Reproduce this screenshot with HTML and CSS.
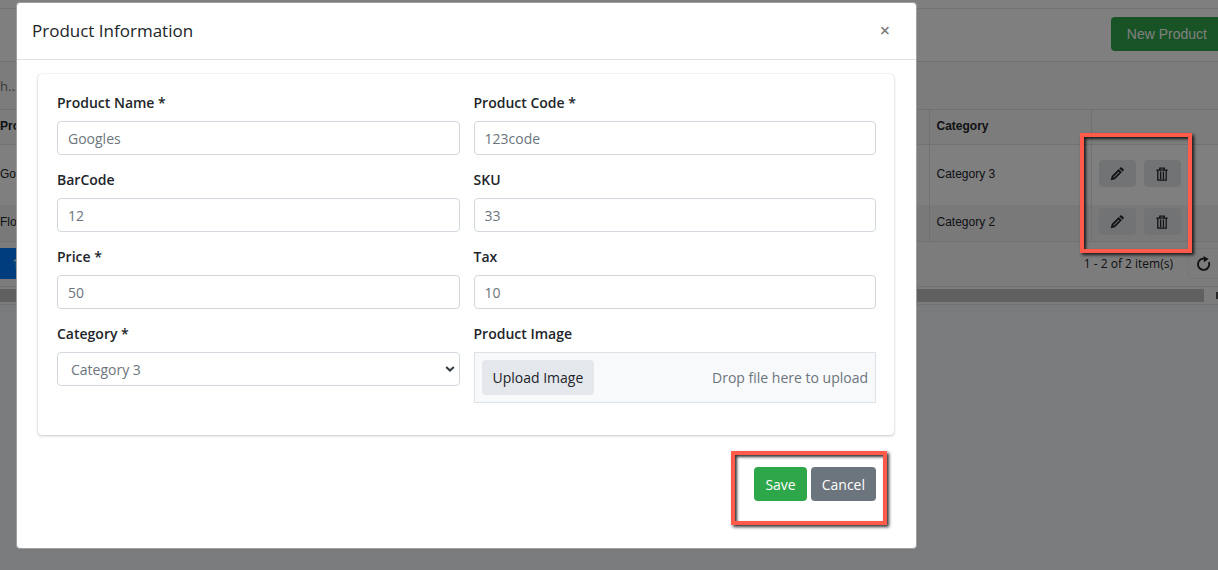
FILE: index.html
```
<!DOCTYPE html>
<html lang="en">
<head>
    <meta charset="UTF-8">
    <meta name="viewport" content="width=device-width, initial-scale=1.0">
    <title>Products</title>
    <link rel="stylesheet" href="styles.css">
</head>
<body>
    <svg class="icon-defs" aria-hidden="true">
        <symbol id="icon-pencil" viewBox="0 0 16 16">
            <path d="M.8 15.2l1.2-4.8 8-8 3.6 3.6-8 8z"/>
            <path d="M10.8 1.6l1-1q.8-.7 1.6 0l2 2q.7.8 0 1.6l-1 1z"/>
            <path d="M4 12l6.4-6.4" stroke="#e4e7eb" stroke-width="1.2"/>
        </symbol>
        <symbol id="icon-trash" viewBox="0 0 16 16">
            <path d="M1.5 3.5h13M5.5 3V1.2h5V3M3.2 4v11h9.6V4M6.4 5v9M9.6 5v9" fill="none" stroke="currentColor" stroke-width="1.5"/>
        </symbol>
        <symbol id="icon-reload" viewBox="0 0 16 16">
            <path d="M9.5 3A6 6 0 1 0 13.6 6.5" fill="none" stroke="currentColor" stroke-width="2"/>
            <path d="M8 0l5.5 3.2L8.4 6.6z"/>
        </symbol>
    </svg>

    <main class="page">
        <header class="page-header">
            <button class="btn-new" type="button">New Product</button>
        </header>

        <div class="grid-toolbar">
            <input class="grid-search" type="text" placeholder="h..." aria-label="Search">
        </div>

        <table class="grid">
            <thead>
                <tr>
                    <th>Product Name</th>
                    <th class="col-category">Category</th>
                    <th class="col-actions"></th>
                </tr>
            </thead>
            <tbody>
                <tr class="row-tall">
                    <td>Googles</td>
                    <td>Category 3</td>
                    <td>
                        <div class="actions">
                            <button class="btn-icon" type="button" aria-label="Edit"><svg><use href="#icon-pencil"/></svg></button>
                            <button class="btn-icon" type="button" aria-label="Delete"><svg><use href="#icon-trash"/></svg></button>
                        </div>
                    </td>
                </tr>
                <tr class="row-alt">
                    <td>Floats</td>
                    <td>Category 2</td>
                    <td>
                        <div class="actions">
                            <button class="btn-icon" type="button" aria-label="Edit"><svg><use href="#icon-pencil"/></svg></button>
                            <button class="btn-icon" type="button" aria-label="Delete"><svg><use href="#icon-trash"/></svg></button>
                        </div>
                    </td>
                </tr>
            </tbody>
        </table>

        <div class="pager">
            <button class="pager-page" type="button">1</button>
            <span class="pager-info">1 - 2 of 2 item(s)</span>
            <button class="pager-reload" type="button" aria-label="Reload"><svg><use href="#icon-reload"/></svg></button>
        </div>
        <div class="scrollbar">
            <div class="scrollbar-thumb"></div>
            <div class="scrollbar-arrow"></div>
        </div>
    </main>

    <div class="backdrop">
        <div class="modal" role="dialog" aria-labelledby="modal-title">
            <div class="modal-header">
                <h5 class="modal-title" id="modal-title">Product Information</h5>
                <button class="modal-close" type="button" aria-label="Close">×</button>
            </div>

            <form class="modal-body">
                <div class="card">
                    <div class="field">
                        <label for="name">Product Name *</label>
                        <input class="control" id="name" type="text" value="Googles">
                    </div>
                    <div class="field">
                        <label for="code">Product Code *</label>
                        <input class="control" id="code" type="text" value="123code">
                    </div>
                    <div class="field">
                        <label for="barcode">BarCode</label>
                        <input class="control" id="barcode" type="text" value="12">
                    </div>
                    <div class="field">
                        <label for="sku">SKU</label>
                        <input class="control" id="sku" type="text" value="33">
                    </div>
                    <div class="field">
                        <label for="price">Price *</label>
                        <input class="control" id="price" type="text" value="50">
                    </div>
                    <div class="field">
                        <label for="tax">Tax</label>
                        <input class="control" id="tax" type="text" value="10">
                    </div>
                    <div class="field">
                        <label for="category">Category *</label>
                        <div class="select-wrap">
                            <select class="control" id="category">
                                <option>Category 3</option>
                                <option>Category 2</option>
                            </select>
                            <svg class="select-arrow" viewBox="0 0 10 6"><path d="M1.2 1l3.8 3.6L8.8 1" fill="none" stroke="currentColor" stroke-width="2"/></svg>
                        </div>
                    </div>
                    <div class="field">
                        <label for="upload">Product Image</label>
                        <div class="upload">
                            <button class="btn btn-light" id="upload" type="button">Upload Image</button>
                            <span class="upload-hint">Drop file here to upload</span>
                        </div>
                    </div>
                </div>

                <div class="modal-footer">
                    <button class="btn btn-success" type="button">Save</button>
                    <button class="btn btn-secondary" type="button">Cancel</button>
                    <div class="highlight highlight-footer"></div>
                </div>
            </form>
        </div>
    </div>

    <div class="highlight highlight-actions"></div>
</body>
</html>
```
FILE: styles.css
```
:root {
    --text: #212529;
    --muted: #6c757d;
    --border: #dee2e6;
    --control-border: #d3d8de;
    --success: #2ea64a;
    --primary: #007bff;
    --highlight: #ff5a4a;
    --ui-font: "Open Sans", "Noto Sans", sans-serif;
    --grid-font: "Liberation Sans", Arial, sans-serif;
}

* {
    box-sizing: border-box;
}

body {
    margin: 0;
    min-height: 100vh;
    overflow: hidden;
    background-color: #f4f6f9;
    color: var(--text);
    font-family: var(--ui-font);
    font-size: 14px;
}

button,
input,
select {
    font: inherit;
    color: inherit;
}

svg {
    fill: currentColor;
}

.icon-defs {
    position: absolute;
    width: 0;
    height: 0;
}

/* Product list */
.page {
    padding-top: 8px;
    background-color: #fff;
}

.page-header {
    display: flex;
    justify-content: flex-end;
    padding: 8px 0 10px;
    border-top: 1px solid var(--border);
}

.btn-new {
    height: 34px;
    padding: 0 11px 0 16px;
    border: 0;
    border-radius: 4px 0 0 4px;
    background-color: var(--success);
    color: #fff;
    font-family: var(--grid-font);
    font-size: 14px;
}

.grid-toolbar {
    height: 48px;
    padding: 8px 0;
    border-top: 1px solid var(--border);
    background-color: #f8f8f8;
}

.grid-search {
    width: 200px;
    height: 32px;
    padding: 0;
    border: 0;
    background: none;
    font-size: 13px;
}

.grid {
    width: 100%;
    table-layout: fixed;
    border-collapse: collapse;
    font-family: var(--grid-font);
    font-size: 12px;
}

.grid th,
.grid td {
    height: 36px;
    padding: 0 8px 2px 7px;
    border-right: 1px solid var(--border);
    text-align: left;
}

.grid th {
    height: 35px;
    border-top: 1px solid var(--border);
    border-bottom: 1px solid var(--border);
    background-color: #f8f8f8;
}

.grid th:first-child,
.grid td:first-child {
    padding-left: 0;
}

.grid th:last-child,
.grid td:last-child {
    border-right: 0;
}

.grid .row-tall td {
    height: 60px;
}

.row-alt {
    background-color: #f2f2f2;
}

.col-category {
    width: 162px;
}

.col-actions {
    width: 127px;
}

.actions {
    display: flex;
    gap: 8px;
}

.btn-icon {
    display: flex;
    align-items: center;
    justify-content: center;
    width: 37px;
    height: 27px;
    padding: 0;
    border: 0;
    border-radius: 4px;
    background-color: #e4e7eb;
}

.btn-icon svg {
    width: 14px;
    height: 14px;
}

.pager {
    display: flex;
    align-items: center;
    height: 46px;
    border-top: 1px solid var(--border);
    border-bottom: 1px solid var(--border);
    background-color: #f8f8f8;
}

.pager-page {
    width: 32px;
    height: 31px;
    padding: 0;
    border: 0;
    background-color: var(--primary);
    color: #fff;
}

.pager-info {
    margin-left: auto;
    font-size: 12px;
}

.pager-reload {
    display: flex;
    align-items: center;
    justify-content: center;
    width: 30px;
    height: 31px;
    margin-left: 15px;
    padding: 0;
    border: 1px solid #eceef0;
    border-right: 0;
    border-radius: 4px 0 0 4px;
    background: none;
}

.pager-reload svg {
    width: 15px;
    height: 15px;
}

.scrollbar {
    display: flex;
    align-items: center;
    justify-content: space-between;
    height: 18px;
    border-bottom: 1px solid var(--border);
    background-color: #f8f8f8;
}

.scrollbar-thumb {
    flex: 1;
    height: 13px;
    margin-right: 12px;
    background-color: #c1c1c1;
}

.scrollbar-arrow {
    width: 2px;
    height: 7px;
    background-color: #505050;
}

/* Modal */
.backdrop {
    position: fixed;
    inset: 0;
    padding: 2px 301px 0 16px;
    background-color: rgba(0, 0, 0, 0.5);
}

.modal {
    border: 1px solid #9c9ea0;
    border-radius: 4px;
    background-color: #fff;
}

.modal-header {
    display: flex;
    align-items: center;
    justify-content: space-between;
    height: 57px;
    padding: 0 26px 2px 15px;
    border-bottom: 1px solid var(--border);
}

.modal-title {
    margin: 0;
    font-size: 17px;
    font-weight: 400;
}

.modal-close {
    padding: 0;
    border: 0;
    background: none;
    color: #7f7f7f;
    font-size: 18px;
    font-weight: 600;
    line-height: 20px;
}

.modal-body {
    padding: 14px 22px 47px 21px;
}

.card {
    display: grid;
    grid-template-columns: 1fr 1fr;
    gap: 14px;
    padding: 18px 18px 32px 19px;
    border-radius: 4px;
    box-shadow: 0 0 1px rgba(0, 0, 0, 0.2), 0 1px 3px rgba(0, 0, 0, 0.2);
}

.field label {
    display: block;
    margin-bottom: 7px;
    font-size: 14px;
    font-weight: 600;
    line-height: 22px;
}

.control {
    display: block;
    width: 100%;
    height: 34px;
    padding: 0 10px;
    border: 1px solid var(--control-border);
    border-radius: 4px;
    background-color: #fff;
    color: var(--muted);
}

.select-wrap {
    position: relative;
}

select.control {
    padding: 0 13px;
    appearance: none;
}

.select-arrow {
    position: absolute;
    top: 14px;
    right: 5px;
    width: 10px;
    height: 6px;
    color: #343a40;
    pointer-events: none;
}

.upload {
    display: flex;
    align-items: center;
    justify-content: space-between;
    padding: 7px;
    border: 1px solid var(--border);
    background-color: #f8f9fa;
}

.upload-hint {
    color: var(--muted);
}

.btn {
    height: 34px;
    padding: 0 11px;
    border: 0;
    border-radius: 4px;
    color: #fff;
}

.btn-light {
    height: 35px;
    background-color: #e4e7eb;
    color: var(--text);
}

.btn-success {
    background-color: var(--success);
}

.btn-secondary {
    background-color: var(--muted);
}

.modal-footer {
    position: relative;
    display: flex;
    justify-content: flex-end;
    gap: 4px;
    padding: 32px 18px 0 0;
}

/* Red callout frames */
.highlight {
    position: absolute;
    border: 4px solid var(--highlight);
    box-shadow: 2px 2px 3px rgba(0, 0, 0, 0.8), inset 2px 2px 3px rgba(0, 0, 0, 0.8);
    pointer-events: none;
}

.highlight-actions {
    top: 133px;
    right: 26px;
    width: 112px;
    height: 120px;
}

.highlight-footer {
    top: 16px;
    right: 7px;
    width: 156px;
    height: 74px;
}
```
